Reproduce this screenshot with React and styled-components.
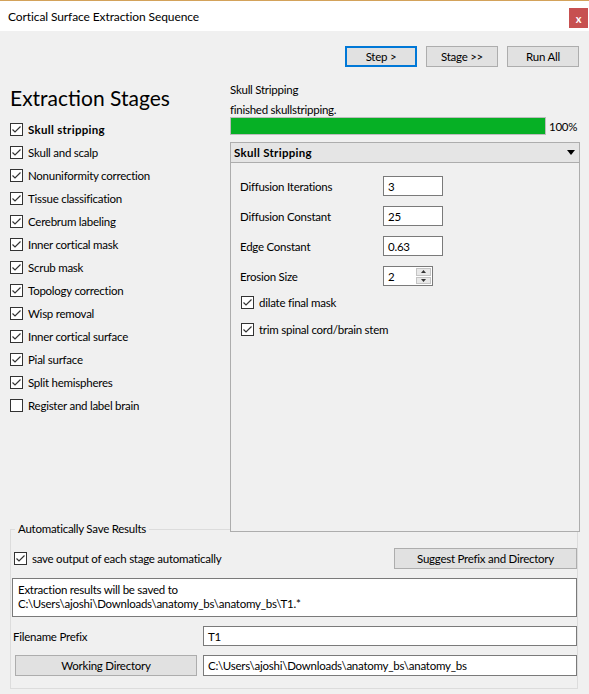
import React from 'react'
import styled, { createGlobalStyle } from 'styled-components'

const GlobalStyle = createGlobalStyle`
  html, body {
    margin: 0;
    padding: 0;
    background: #f0f0f0;
  }
  * {
    box-sizing: border-box;
  }
`

const FONT = `Lato, "Liberation Sans", sans-serif`

const Window = styled.div`
  width: 589px;
  height: 694px;
  background: #f0f0f0;
  border-top: 1px solid #d3a25a;
  font-family: ${FONT};
  font-size: 11.5px;
  letter-spacing: -0.25px;
  color: #000;
  overflow: hidden;
`

const TitleBar = styled.div`
  height: 30px;
  background: #fff;
  display: flex;
  align-items: center;
  justify-content: space-between;
  padding-left: 8px;
  padding-right: 1px;
`

const Title = styled.span`
  font-size: 12px;
  letter-spacing: -0.1px;
  color: #000;
`

const CloseButton = styled.div`
  width: 19px;
  height: 20px;
  margin-top: 4px;
  background: #c75050;
  color: #fff;
  font-weight: bold;
  font-size: 11px;
  display: flex;
  align-items: center;
  justify-content: center;
`

const Toolbar = styled.div`
  display: flex;
  justify-content: flex-end;
  gap: 9px;
  padding: 15px 10px 0 0;
`

const Button = styled.button`
  font-family: ${FONT};
  font-size: 11.5px;
  letter-spacing: -0.25px;
  color: #000;
  width: ${({ $w }) => $w || 72}px;
  height: 21px;
  padding: 0;
  margin: 0;
  background: #e1e1e1;
  border: ${({ $default }) => ($default ? '2px solid #0078d7' : '1px solid #adadad')};
  display: flex;
  align-items: center;
  justify-content: center;
`

const MainRow = styled.div`
  display: flex;
  margin-top: 15px;
  padding-left: 10px;
`

const StageColumn = styled.div`
  width: 220px;
  display: flex;
  flex-direction: column;
`

const Heading = styled.h1`
  margin: 4px 0 8px 0;
  font-family: ${FONT};
  font-weight: normal;
  font-size: 21px;
  letter-spacing: 0;
  line-height: 24px;
`

const CheckRow = styled.label`
  display: flex;
  align-items: center;
  gap: 5px;
  height: ${({ $h }) => $h || 23}px;
  font-weight: ${({ $bold }) => ($bold ? 'bold' : 'normal')};
  letter-spacing: ${({ $bold }) => ($bold ? '0.3px' : 'inherit')};
  white-space: nowrap;
`

const BoxFrame = styled.span`
  width: 13px;
  height: 13px;
  flex: none;
  background: #fff;
  border: 1px solid #333;
  display: inline-flex;
  align-items: center;
  justify-content: center;
`

function CheckBox({ checked }) {
  return (
    <BoxFrame>
      {checked && (
        <svg width="11" height="11" viewBox="0 0 11 11">
          <path d="M1.5 5.5 L4 8 L9.5 2.5" fill="none" stroke="#333" strokeWidth="1.2" />
        </svg>
      )}
    </BoxFrame>
  )
}

const StageColumnRight = styled.div`
  width: 350px;
  display: flex;
  flex-direction: column;
`

const StageLabel = styled.div`
  height: 16px;
  line-height: 16px;
`

const StatusLabel = styled.div`
  margin-top: 5px;
  height: 14px;
  line-height: 14px;
`

const ProgressRow = styled.div`
  display: flex;
  align-items: center;
  gap: 3px;
  height: 18px;
`

const ProgressTrack = styled.div`
  width: 316px;
  height: 18px;
  border: 1px solid #bcbcbc;
  background: #e6e6e6;
  display: flex;
`

const ProgressFill = styled.div`
  height: 100%;
  background: #06b025;
`

const ComboHeader = styled.div`
  margin-top: 7px;
  height: 21px;
  border: 1px solid #adadad;
  background: #e5e5e5;
  display: flex;
  align-items: center;
  justify-content: space-between;
  padding: 0 4px 0 3px;
  font-weight: bold;
  letter-spacing: 0.3px;
`

const Panel = styled.div`
  position: relative;
  z-index: 1;
  height: 369px;
  background: #f0f0f0;
  border: 1px solid #adadad;
  border-top: none;
  padding: 13px 0 0 9px;
  display: flex;
  flex-direction: column;
`

const ParamGrid = styled.div`
  display: grid;
  grid-template-columns: 143px auto;
  row-gap: 10px;
  align-items: center;
  justify-items: start;
`

const TextInput = styled.div`
  width: ${({ $w }) => ($w ? `${$w}px` : '100%')};
  height: ${({ $h }) => $h || 20}px;
  background: #fff;
  border: 1px solid #7a7a7a;
  padding: 0 4px;
  display: flex;
  align-items: center;
  white-space: nowrap;
  overflow: hidden;
`

const SpinBox = styled.div`
  width: 50px;
  height: 20px;
  background: #fff;
  border: 1px solid #7a7a7a;
  display: flex;
  align-items: center;
  justify-content: space-between;
  padding-left: 4px;
`

const SpinButtons = styled.div`
  width: 15px;
  height: 16px;
  margin-right: 1px;
  display: flex;
  flex-direction: column;
  gap: 1px;
`

const SpinHalf = styled.div`
  flex: 1;
  background: #e8e8e8;
  border: 1px solid #c4c4c4;
  display: flex;
  align-items: center;
  justify-content: center;
`

const PanelChecks = styled.div`
  margin-top: 8px;
  padding-left: 1px;
  display: flex;
  flex-direction: column;
  gap: 11px;
`

const GroupBox = styled.fieldset`
  margin: -10px 11px 0 10px;
  padding: 12px 0 12px 1px;
  border: 1px solid #dcdcdc;
  min-width: 0;
  display: flex;
  flex-direction: column;
  gap: 9px;
`

const GroupTitle = styled.legend`
  margin-left: 3px;
  padding: 0 3px;
  line-height: 14px;
  height: 14px;
`

const SaveRow = styled.div`
  display: flex;
  align-items: center;
  justify-content: space-between;
  padding-left: 2px;
`

const NoteBox = styled.div`
  height: 39px;
  background: #fff;
  border: 1px solid #7a7a7a;
  padding: 4px 5px;
  line-height: 14px;
`

const PathGrid = styled.div`
  display: grid;
  grid-template-columns: 191px 1fr;
  row-gap: 9px;
  align-items: center;
`

const FieldLabel = styled.span`
  padding-left: 1px;
`

const GreyButton = styled(Button)`
  margin-left: 3px;
`

const stages = [
  ['Skull stripping', true, true],
  ['Skull and scalp', true],
  ['Nonuniformity correction', true],
  ['Tissue classification', true],
  ['Cerebrum labeling', true],
  ['Inner cortical mask', true],
  ['Scrub mask', true],
  ['Topology correction', true],
  ['Wisp removal', true],
  ['Inner cortical surface', true],
  ['Pial surface', true],
  ['Split hemispheres', true],
  ['Register and label brain', false],
]

const params = [
  ['Diffusion Iterations', '3'],
  ['Diffusion Constant', '25'],
  ['Edge Constant', '0.63'],
]

export default function App() {
  const progress = 100
  return (
    <>
      <GlobalStyle />
      <Window>
        <TitleBar>
          <Title>Cortical Surface Extraction Sequence</Title>
          <CloseButton>x</CloseButton>
        </TitleBar>

        <Toolbar>
          <Button $default>Step &gt;</Button>
          <Button>Stage &gt;&gt;</Button>
          <Button>Run All</Button>
        </Toolbar>

        <MainRow>
          <StageColumn>
            <Heading>Extraction Stages</Heading>
            {stages.map(([name, checked, bold]) => (
              <CheckRow key={name} $bold={bold}>
                <CheckBox checked={checked} />
                {name}
              </CheckRow>
            ))}
          </StageColumn>

          <StageColumnRight>
            <StageLabel>Skull Stripping</StageLabel>
            <StatusLabel>finished skullstripping.</StatusLabel>
            <ProgressRow>
              <ProgressTrack>
                <ProgressFill style={{ width: `${progress}%` }} />
              </ProgressTrack>
              <span>{progress}%</span>
            </ProgressRow>
            <ComboHeader>
              Skull Stripping
              <svg width="8" height="5" viewBox="0 0 8 5">
                <path d="M0 0 H8 L4 5 Z" fill="#000" />
              </svg>
            </ComboHeader>
            <Panel>
              <ParamGrid>
                {params.map(([label, value]) => (
                  <React.Fragment key={label}>
                    <span>{label}</span>
                    <TextInput $w={60}>{value}</TextInput>
                  </React.Fragment>
                ))}
                <span>Erosion Size</span>
                <SpinBox>
                  2
                  <SpinButtons>
                    <SpinHalf>
                      <svg width="5" height="3" viewBox="0 0 5 3">
                        <path d="M0 3 H5 L2.5 0 Z" fill="#333" />
                      </svg>
                    </SpinHalf>
                    <SpinHalf>
                      <svg width="5" height="3" viewBox="0 0 5 3">
                        <path d="M0 0 H5 L2.5 3 Z" fill="#333" />
                      </svg>
                    </SpinHalf>
                  </SpinButtons>
                </SpinBox>
              </ParamGrid>
              <PanelChecks>
                <CheckRow $h={16}>
                  <CheckBox checked />
                  dilate final mask
                </CheckRow>
                <CheckRow $h={16}>
                  <CheckBox checked />
                  trim spinal cord/brain stem
                </CheckRow>
              </PanelChecks>
            </Panel>
          </StageColumnRight>
        </MainRow>

        <GroupBox>
          <GroupTitle>Automatically Save Results</GroupTitle>
          <SaveRow>
            <CheckRow $h={21}>
              <CheckBox checked />
              save output of each stage automatically
            </CheckRow>
            <Button $w={183}>Suggest Prefix and Directory</Button>
          </SaveRow>
          <NoteBox>
            Extraction results will be saved to
            <br />
            C:\Users\ajoshi\Downloads\anatomy_bs\anatomy_bs\T1.*
          </NoteBox>
          <PathGrid>
            <FieldLabel>Filename Prefix</FieldLabel>
            <TextInput>T1</TextInput>
            <GreyButton $w={182}>Working Directory</GreyButton>
            <TextInput $h={21}>C:\Users\ajoshi\Downloads\anatomy_bs\anatomy_bs</TextInput>
          </PathGrid>
        </GroupBox>
      </Window>
    </>
  )
}
